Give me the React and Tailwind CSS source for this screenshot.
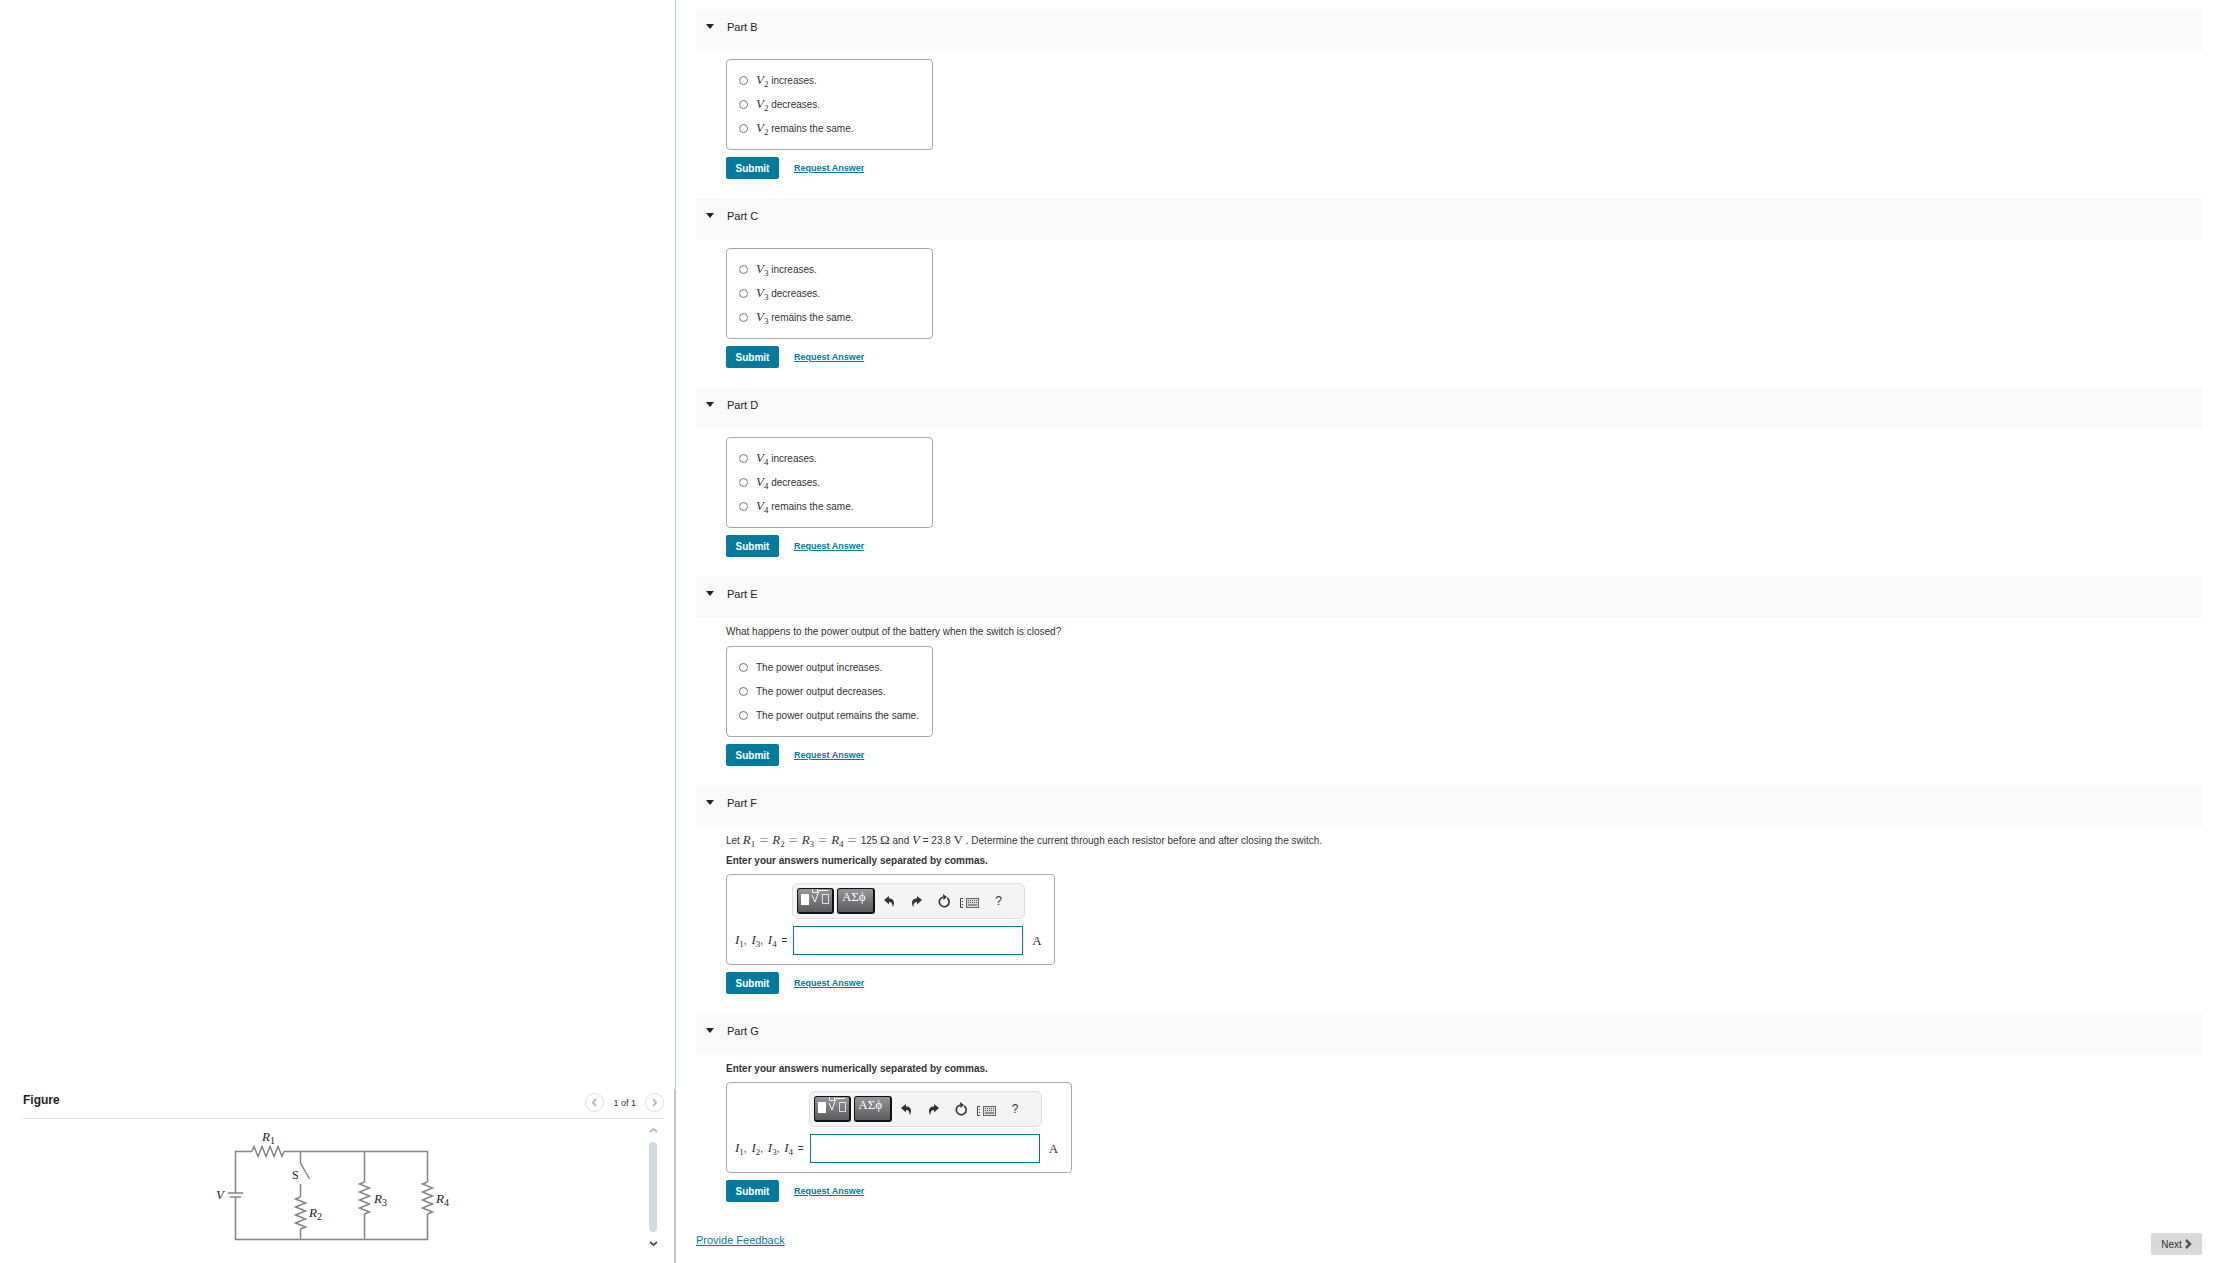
import { useState } from 'react'

const changeOptions = ['increases.', 'decreases.', 'remains the same.']
const powerOptions = [
  'The power output increases.',
  'The power output decreases.',
  'The power output remains the same.',
]

function Sym({ name, sub }) {
  return (
    <span className="font-['Liberation_Serif',serif] text-[13px] leading-none">
      <i>{name}</i>
      {sub && <span className="relative top-[3px] text-[9px]">{sub}</span>}
    </span>
  )
}

function Part({ title, children }) {
  const [open, setOpen] = useState(true)
  return (
    <section>
      <h2 className="bg-[#f9f9f9]">
        <button
          onClick={() => setOpen(!open)}
          aria-expanded={open}
          className="flex h-[42px] w-full items-center gap-[13px] pb-1.5 pl-2.5 text-left text-[11px] font-normal text-[#222]"
        >
          <svg width="8" height="5" viewBox="0 0 8 5" className={open ? '-mt-0.5' : '-mt-0.5 -rotate-90'}>
            <path d="M0 0h8L4 5z" fill="#222" />
          </svg>
          {title}
        </button>
      </h2>
      {open && (
        <div className="pt-1 pb-[19px] pl-[30px]">
          {children}
          <div className="mt-[7px] flex items-center gap-[15px]">
            <button className="h-[22px] w-[53px] rounded-xs bg-[#047a9c] text-[10px] font-bold text-white">
              Submit
            </button>
            <a href="#request" className="text-[9px] font-bold text-[#047a9c] underline">
              Request Answer
            </a>
          </div>
        </div>
      )}
    </section>
  )
}

function Choices({ name, sub, options }) {
  return (
    <fieldset className="mt-1 w-[207px] rounded border border-[#a9a9a9] pt-2 pb-[9px] pl-3">
      {options.map((text, i) => (
        <label key={text} className="flex h-6 items-center gap-2">
          <input type="radio" name={name} value={i} className="m-0 size-[9px]" />
          <span className="whitespace-nowrap">
            {sub && <><Sym name="V" sub={sub} />{' '}</>}
            {text}
          </span>
        </label>
      ))}
    </fieldset>
  )
}

function Toolbar() {
  const dark =
    'flex h-[26px] items-start justify-center rounded-[3px] border-t border-r-2 border-b-2 border-l border-[#111] bg-linear-to-b from-[#96969c] to-[#5c5c5c] text-white'
  return (
    <div className="flex h-9 w-[233px] items-center rounded-md border border-[#ddd] bg-[#f4f4f4] pl-1 text-[#333]">
      <button aria-label="Templates" className={`${dark} w-[37px]`}>
        <svg width="34" height="18" viewBox="0 0 34 18" fill="none" stroke="#fff">
          <rect x="3" y="5" width="8" height="11" fill="#fff" stroke="none" />
          <path d="M14.5 0v3.5h5V0" strokeOpacity="0.85" />
          <path d="M14 6l3 7 4-11.500h9" strokeOpacity="0.9" />
          <rect x="24.5" y="5.5" width="6" height="9" strokeOpacity="0.75" />
        </svg>
      </button>
      <button
        aria-label="Symbols"
        className={`${dark} ml-[3px] w-[38px] pr-1 font-['Liberation_Serif',serif] text-[13px] leading-4`}
      >
        ΑΣϕ
      </button>
      <button aria-label="Undo" className="ml-[9px]">
        <svg width="10" height="11" viewBox="0 0 10 11" fill="currentColor">
          <path d="M0 4l5-4v2.5C8.5 2.5 10 4.5 10 7c0 1.5-.6 3-1.5 4 .2-3.5-.9-5-3.500-5v2.5z" />
        </svg>
      </button>
      <button aria-label="Redo" className="ml-[18px]">
        <svg width="10" height="11" viewBox="0 0 10 11" fill="currentColor">
          <path d="M10 4L5 0v2.5C1.5 2.500 0 4.500 0 7c0 1.500.6 3 1.500 4C1.300 7.500 2.400 6 5 6v2.500z" />
        </svg>
      </button>
      <button aria-label="Reset" className="ml-4">
        <svg width="12" height="14" viewBox="0 0 12 14">
          <path d="M9.300 4A4.900 4.900 0 1 1 5.500 3" fill="none" stroke="currentColor" strokeWidth="1.6" />
          <path d="M5 0l4 2.900L5.500 6z" fill="currentColor" />
        </svg>
      </button>
      <button aria-label="Keyboard shortcuts" className="ml-2.5 pt-[3px]">
        <svg width="19" height="10" viewBox="0 0 19 10">
          <path d="M3 .5H.5v9H3M2.500 3v1M2.500 6v1" fill="none" stroke="#444" />
          <rect x="6.5" y=".5" width="12" height="9" fill="#ddd" stroke="#666" />
          <path d="M8 2.500h9M8 4.500h9" stroke="#555" strokeDasharray="1 1" />
          <path d="M8 7h9" stroke="#444" />
        </svg>
      </button>
      <button aria-label="Help" className="ml-4 text-[12px]">?</button>
    </div>
  )
}

function NumericAnswer({ id, subs }) {
  return (
    <div className="mt-1 w-fit rounded border border-[#a9a9a9] px-2 pt-2 pb-[9px]">
      <div className="grid grid-cols-[auto_auto_auto] items-center gap-y-[7px]">
        <div className="col-start-2 -mx-px">
          <Toolbar />
        </div>
        <label htmlFor={id} className="col-start-1 pr-1.5 whitespace-nowrap">
          {subs.map((n, i) => (
            <span key={n} className="mr-0.5">
              <Sym name="I" sub={n} />
              {i < subs.length - 1 && ', '}
            </span>
          ))}{' '}
          =
        </label>
        <input id={id} type="text" className="h-[29px] w-[230px] border border-[#047a9c] bg-white px-1 outline-none" />
        <span className="w-[22px] pl-2 font-['Liberation_Serif',serif] text-[13px]">A</span>
      </div>
    </div>
  )
}

function zigzag(x, y, vertical) {
  const pts = [[0, 0]]
  for (let i = 0; i < 8; i++) pts.push([2 + i * 4, i % 2 ? 5 : -5])
  pts.push([32, 0])
  return pts.map(([a, b]) => (vertical ? `${x + b},${y + a}` : `${x + a},${y + b}`)).join(' ')
}

function CircuitLabel({ x, y, name, sub }) {
  return (
    <text x={x} y={y} fontSize="13" fontStyle="italic">
      {name}
      {sub && <tspan dy="3" fontSize="10" fontStyle="normal">{sub}</tspan>}
    </text>
  )
}

function Circuit() {
  return (
    <svg
      width="240"
      height="118"
      viewBox="0 0 240 118"
      className="font-['Liberation_Serif',serif]"
      fill="#222"
      role="img"
      aria-label="Circuit with a battery, a switch and four resistors"
    >
      <g fill="none" stroke="#858585" strokeWidth="1.5">
        <path d="M40 26.500H23.500V68M23.500 72v42.500H215.500V89M72 26.500h143.500V57M16 68h15M18 72h11" />
        <path d="M88.500 26.500V38l9 16M88.500 59v13M88.500 104v10.500M152.500 26.500V57M152.500 89v25.500" />
        <polyline points={zigzag(40, 26.5, false)} />
        <polyline points={zigzag(88.5, 72, true)} />
        <polyline points={zigzag(152.5, 57, true)} />
        <polyline points={zigzag(215.5, 57, true)} />
      </g>
      <CircuitLabel x={50} y={16} name="R" sub="1" />
      <CircuitLabel x={97} y={92} name="R" sub="2" />
      <CircuitLabel x={162} y={78} name="R" sub="3" />
      <CircuitLabel x={224} y={78} name="R" sub="4" />
      <CircuitLabel x={4} y={74} name="V" />
      <text x="80" y="54" fontSize="12">S</text>
    </svg>
  )
}

function Chevron({ d, className }) {
  return (
    <svg width="9" height="9" viewBox="0 0 9 9" className={className} fill="none" stroke="currentColor" strokeWidth="2">
      <path d={d} />
    </svg>
  )
}

function FigurePanel() {
  const round = 'flex size-[19px] items-center justify-center rounded-full border border-[#ddd] text-[#bbb]'
  return (
    <aside className="flex min-w-0 flex-col justify-end">
      <div className="h-[174px] border-r border-[#b9cbdc] pr-2.5 pl-[23px]">
        <div className="flex h-[30px] items-start justify-between border-b border-[#ddd]">
          <h2 className="pt-[3px] text-[12px] leading-4 font-bold text-[#222]">Figure</h2>
          <div className="flex items-center gap-[9px] pt-[3px] text-[9px]">
            <button aria-label="Previous figure" className={round}>
              <Chevron d="M6 1L3 4.500 6 8" />
            </button>
            <span className="pt-0.5">1 of 1</span>
            <button aria-label="Next figure" className={round}>
              <Chevron d="M3 1l3 3.500L3 8" />
            </button>
          </div>
        </div>
        <div className="flex">
          <div className="flex flex-1 justify-center pt-1.5 pr-2">
            <Circuit />
          </div>
          <div className="mr-[7px] flex w-2 flex-col items-center pt-[7px]">
            <Chevron d="M1 6l3.500-3L8 6" className="text-[#bbb]" />
            <div className="my-[7px] h-[90px] w-2 rounded-full bg-[#d0dae3]" />
            <Chevron d="M1 3l3.500 3L8 3" className="text-[#555]" />
          </div>
        </div>
      </div>
    </aside>
  )
}

function Eq() {
  return (
    <span className="px-1 align-middle font-['Liberation_Serif',serif] text-[16px] leading-none text-[#999]">=</span>
  )
}

function Upright({ children }) {
  return <span className="font-['Liberation_Serif',serif] text-[13px] leading-none">{children}</span>
}

export default function App() {
  return (
    <div className="grid min-h-screen grid-cols-[675fr_1555fr] bg-white font-['Liberation_Sans',Arial,sans-serif] text-[10px] leading-[19px] text-[#333]">
      <FigurePanel />
      <main className="min-w-0 border-l border-[#b9c8de] pt-[9px] pr-7 pl-5">
        <Part title="Part B">
          <Choices name="b" sub="2" options={changeOptions} />
        </Part>
        <Part title="Part C">
          <Choices name="c" sub="3" options={changeOptions} />
        </Part>
        <Part title="Part D">
          <Choices name="d" sub="4" options={changeOptions} />
        </Part>
        <Part title="Part E">
          <p className="leading-5">What happens to the power output of the battery when the switch is closed?</p>
          <Choices name="e" options={powerOptions} />
        </Part>
        <Part title="Part F">
          <p className="h-5 leading-5">
            Let <Sym name="R" sub="1" /><Eq /><Sym name="R" sub="2" /><Eq /><Sym name="R" sub="3" /><Eq />
            <Sym name="R" sub="4" /><Eq />125 <Upright>Ω</Upright> and <Sym name="V" /> = 23.8 <Upright>V</Upright>{' '}
            . Determine the current through each resistor before and after closing the switch.
          </p>
          <p className="font-bold">Enter your answers numerically separated by commas.</p>
          <NumericAnswer id="answer-f" subs={['1', '3', '4']} />
        </Part>
        <Part title="Part G">
          <p className="font-bold">Enter your answers numerically separated by commas.</p>
          <NumericAnswer id="answer-g" subs={['1', '2', '3', '4']} />
        </Part>
        <div className="mt-3 flex items-start justify-between">
          <a href="#feedback" className="text-[11px] leading-[14px] text-[#047a9c] underline">
            Provide Feedback
          </a>
          <button className="flex h-[22px] w-[51px] items-center justify-center gap-0.5 rounded-xs bg-[#d9d9d9] text-[10px]">
            Next
            <svg width="8" height="10" viewBox="0 0 8 10" fill="none" stroke="#555" strokeWidth="2.5">
              <path d="M2 1l4 4-4 4" />
            </svg>
          </button>
        </div>
      </main>
    </div>
  )
}
